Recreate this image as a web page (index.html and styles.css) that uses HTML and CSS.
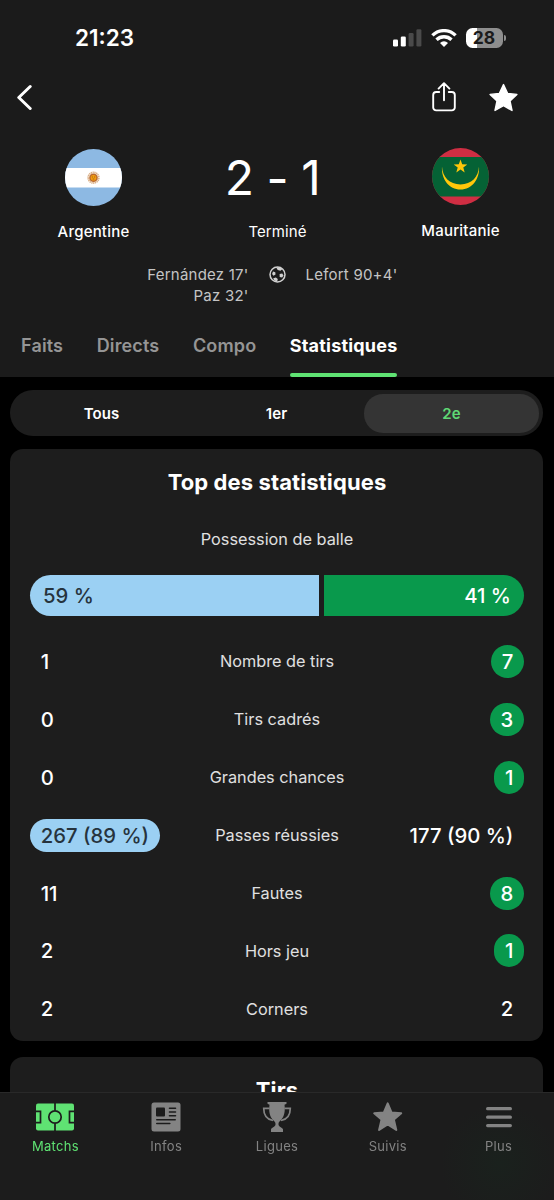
FILE: index.html
```html
<!DOCTYPE html>
<html lang="fr">
<head>
    <meta charset="UTF-8">
    <meta name="viewport" content="width=device-width, initial-scale=1.0">
    <title>Argentine 2 - 1 Mauritanie</title>
    <link rel="stylesheet" href="styles.css">
</head>
<body>
    <header class="header">
        <div class="status-bar">
            <span class="time">21:23</span>
            <div class="status-icons">
                <svg width="29" height="18" viewBox="0 0 29 18">
                    <rect x="0" y="10.5" width="5" height="7" rx="1.3" fill="#fff"/>
                    <rect x="7.8" y="7.5" width="5" height="10" rx="1.3" fill="#fff"/>
                    <rect x="15.6" y="4" width="5" height="13.5" rx="1.3" fill="#4a4a4a"/>
                    <rect x="23.4" y="0.3" width="5" height="17.2" rx="1.3" fill="#4a4a4a"/>
                </svg>
                <svg width="26" height="18" viewBox="0 0 26 18">
                    <g fill="none" stroke="#fff" stroke-width="3.3">
                        <path d="M1.4 6.4A16.4 16.4 0 0 1 24.6 6.4"/>
                        <path d="M5.5 10.8A10.8 10.8 0 0 1 20.5 10.8"/>
                    </g>
                    <path d="M13 18l-4-4.1a5.8 5.8 0 0 1 8 0z" fill="#fff"/>
                </svg>
                <div class="battery"><span>28</span></div>
            </div>
        </div>

        <div class="toolbar">
            <svg width="16" height="26" viewBox="0 0 16 26" fill="none" stroke="#fff" stroke-width="3" stroke-linecap="round" stroke-linejoin="round">
                <path d="M14.2 2.5L2.8 13.5l11.4 11"/>
            </svg>
            <div class="actions">
                <svg width="24" height="30" viewBox="0 0 24 30" fill="none" stroke="#fff" stroke-width="1.9" stroke-linecap="round" stroke-linejoin="round">
                    <path d="M7.2 10H4.2A3 3 0 0 0 1.2 13v12.4a3 3 0 0 0 3 3h15.6a3 3 0 0 0 3-3V13a3 3 0 0 0-3-3h-3M12 18.3V1.6M6.6 6.6L12 1.2l5.4 5.4"/>
                </svg>
                <svg width="30" height="29" viewBox="0 0 30 29" fill="#fff" stroke="#fff" stroke-width="1.4" stroke-linejoin="round">
                    <path d="M14.5 1.6l4.1 8.8 9.3 1-6.9 6.6 2 9.5-8.5-4.8L6 27.5l2-9.5-6.9-6.6 9.3-1z"/>
                </svg>
            </div>
        </div>

        <div class="match">
            <div class="team">
                <svg width="57" height="57" viewBox="0 0 57 57">
                    <clipPath id="clipArg"><circle cx="28.5" cy="28.5" r="28.5"/></clipPath>
                    <g clip-path="url(#clipArg)">
                        <rect width="57" height="57" fill="#8db9e3"/>
                        <rect y="19" width="57" height="19.5" fill="#fff"/>
                        <circle cx="28.5" cy="28.7" r="5.3" fill="none" stroke="#dcb28a" stroke-width="1.8" stroke-dasharray="1.3 .5"/>
                        <circle cx="28.5" cy="28.7" r="4.3" fill="#b9692d"/>
                        <circle cx="28.5" cy="28.7" r="2.8" fill="#f5a010"/>
                        <path d="M26.8 28h1.3M29 28h1.2M27.6 30h1.8" stroke="#8a4b12" stroke-width=".7"/>
                    </g>
                </svg>
                <span class="team-name">Argentine</span>
            </div>
            <div class="result">
                <span class="score">2 <span class="dash">-</span> 1</span>
                <span class="state">Terminé</span>
            </div>
            <div class="team team-away">
                <svg width="57" height="57" viewBox="0 0 57 57">
                    <clipPath id="clipMau"><circle cx="28.5" cy="28.5" r="28.5"/></clipPath>
                    <g clip-path="url(#clipMau)">
                        <rect width="57" height="57" fill="#cf2e43"/>
                        <rect y="9" width="57" height="39.5" fill="#056235"/>
                        <path d="M10 18.5C9 31 17 41.5 28.5 41.5S48 31 47 18.5C46.5 29 39.5 36.4 28.5 36.4S10.5 29 10 18.5z" fill="#ffc70a"/>
                        <path d="M28.5 11.5l1.7 4.8 5.1.1-4 3.1 1.4 4.9-4.2-2.9-4.2 2.9 1.4-4.9-4-3.1 5.1-.1z" fill="#ffc70a"/>
                    </g>
                </svg>
                <span class="team-name">Mauritanie</span>
            </div>
        </div>

        <div class="scorers">
            <div class="scorers-home">Fernández 17'<br>Paz 32'</div>
            <svg width="17" height="17" viewBox="0 0 17 17">
                <circle cx="8.5" cy="8.5" r="7.5" fill="none" stroke="#d0d0d0" stroke-width="1.5"/>
                <path d="M4 5.6l2.3.6.2 2.4-2 1.1-1.4-1.7zM7.2 1.5l3.2-.3 3.2 1.8-2.2 1.8-2.7-.7zM10.6 8l2.6-.6 1.3 2-1.4 2.2-2.4-.7zM4.2 12.2l2.7-.7 1.9 1.6-.6 2.4-2.9-.9z" fill="#d0d0d0"/>
            </svg>
            <div class="scorers-away">Lefort 90+4'</div>
        </div>

        <nav class="tabs">
            <a class="tab">Faits</a>
            <a class="tab">Directs</a>
            <a class="tab">Compo</a>
            <a class="tab active">Statistiques</a>
        </nav>
    </header>

    <main class="content">
        <div class="filter">
            <span>Tous</span>
            <span>1er</span>
            <span class="selected">2e</span>
        </div>

        <section class="card">
            <h2>Top des statistiques</h2>
            <p class="possession-label">Possession de balle</p>
            <div class="possession" style="grid-template-columns: 59fr 41fr">
                <div class="home">59 %</div>
                <div class="away">41 %</div>
            </div>
            <ul class="stats">
                <li><span class="value">1</span><span class="label">Nombre de tirs</span><span class="value away">7</span></li>
                <li><span class="value">0</span><span class="label">Tirs cadrés</span><span class="value away">3</span></li>
                <li><span class="value">0</span><span class="label">Grandes chances</span><span class="value away">1</span></li>
                <li><span class="value home">267 (89 %)</span><span class="label">Passes réussies</span><span class="value">177 (90 %)</span></li>
                <li><span class="value">11</span><span class="label">Fautes</span><span class="value away">8</span></li>
                <li><span class="value">2</span><span class="label">Hors jeu</span><span class="value away">1</span></li>
                <li><span class="value">2</span><span class="label">Corners</span><span class="value">2</span></li>
            </ul>
        </section>

        <section class="card">
            <h2>Tirs</h2>
        </section>
    </main>

    <nav class="bottom-nav">
        <a class="active">
            <svg width="38" height="30" viewBox="0 0 38 30">
                <rect x="0" y="1.5" width="38" height="27" rx="2" fill="#5fe273"/>
                <g fill="none" stroke="#1c1c1c" stroke-width="1.7">
                    <path d="M19 1v7.5M19 21.5V29M0 9.3h4.5v11.4H0M38 9.3h-4.5v11.4H38"/>
                    <circle cx="19" cy="15" r="6.2"/>
                </g>
            </svg>
            <span>Matchs</span>
        </a>
        <a>
            <svg width="30" height="30" viewBox="0 0 30 30">
                <rect x=".5" y=".5" width="29" height="29" rx="2.5" fill="#838383"/>
                <rect x="5" y="5.5" width="9" height="9" rx="1" fill="#1c1c1c"/>
                <path d="M18.5 6.3h6M18.5 10h6M18.5 13.7h6M5.8 17.8h18.4M5.8 21.5h13" stroke="#1c1c1c" stroke-width="1.6" stroke-linecap="round"/>
            </svg>
            <span>Infos</span>
        </a>
        <a>
            <svg width="30" height="30" viewBox="0 0 30 30">
                <path d="M5.5 0h19v1.8l-2 1c.9 6.5-.2 12.4-4 15.6-1.6 1.4-2 2.3-2 3.8 0 2.6 3.5 3.2 4.5 5V30H9v-2.8c1-1.8 4.5-2.4 4.5-5 0-1.5-.4-2.4-2-3.8-3.8-3.2-4.9-9.1-4-15.6l-2-1z" fill="#838383"/>
                <path d="M7.5 6.3H1.7c0 6.4 2.6 11.2 9.3 12.2M22.5 6.3h5.8c0 6.4-2.6 11.2-9.3 12.2" fill="none" stroke="#838383" stroke-width="1.7"/>
            </svg>
            <span>Ligues</span>
        </a>
        <a>
            <svg width="30" height="30" viewBox="0 0 30 30" fill="#838383" stroke="#838383" stroke-width="2" stroke-linejoin="round">
                <path d="M14.7 1.3l3.8 9.2 9.7.8-7.3 6.3 2.4 10.4-8.6-5.5L6.1 28l2.4-10.4-7.3-6.3 9.7-.8z"/>
            </svg>
            <span>Suivis</span>
        </a>
        <a>
            <svg width="30" height="30" viewBox="0 0 30 30" stroke="#838383" stroke-width="3.2" stroke-linecap="round">
                <path d="M3.6 6.7h22.8M3.6 15.2h22.8M3.6 23.6h22.8"/>
            </svg>
            <span>Plus</span>
        </a>
    </nav>
</body>
</html>
```

FILE: styles.css
```css
* {
    box-sizing: border-box;
}
body {
    margin: 0;
    height: 1200px;
    overflow: hidden;
    background-color: #000;
    color: #fff;
    font-family: Inter, "Liberation Sans", sans-serif;
    display: flex;
    flex-direction: column;
}
svg {
    display: block;
    flex: none;
}
.header {
    height: 377px;
    flex: none;
    background-color: #1b1b1b;
    display: flex;
    flex-direction: column;
}

/* status bar */
.status-bar {
    height: 75px;
    padding: 0 47.5px 0 75px;
    display: flex;
    justify-content: space-between;
    align-items: center;
}
.time {
    font-size: 22.5px;
    font-weight: 600;
}
.status-icons {
    display: flex;
    align-items: center;
    gap: 9px;
}
.battery {
    position: relative;
    width: 37px;
    height: 20px;
    border-radius: 6.5px;
    background: linear-gradient(90deg, #fff 11px, #8e8e8e 11px);
    color: #1b1b1b;
    font-size: 17.5px;
    font-weight: 700;
    line-height: 20px;
    text-align: center;
    margin-right: 4px;
}
.battery::after {
    content: "";
    position: absolute;
    right: -3px;
    top: 7px;
    width: 2px;
    height: 6px;
    border-radius: 0 2px 2px 0;
    background-color: #8e8e8e;
}

/* back, share, favourite */
.toolbar {
    height: 44px;
    padding: 0 35px 0 16px;
    display: flex;
    justify-content: space-between;
    align-items: center;
}
.actions {
    display: flex;
    align-items: center;
    gap: 33px;
}

/* score */
.match {
    height: 145px;
    padding-top: 30px;
    display: grid;
    grid-template-columns: 187px 180px 187px;
}
.team, .result {
    display: flex;
    flex-direction: column;
    align-items: center;
}
.team-away {
    margin-top: -1px;
}
.team-name, .state {
    font-size: 15px;
    line-height: 20px;
    margin-top: 16px;
    letter-spacing: 0.2px;
}
.team-name {
    font-weight: 500;
}
.state {
    padding-left: 1px;
    letter-spacing: 0.1px;
}
.score {
    height: 57px;
    padding-right: 9px;
    font-size: 48px;
    line-height: 58px;
    letter-spacing: -0.5px;
}
.dash {
    line-height: 0;
    vertical-align: -1px;
}
.scorers {
    height: 61px;
    display: grid;
    grid-template-columns: 1fr 17px 1fr;
    column-gap: 20px;
    font-size: 15px;
    line-height: 21px;
    letter-spacing: 0.22px;
    color: #c4c4c4;
}
.scorers svg {
    margin-top: 2px;
}
.scorers-home {
    text-align: right;
}

.tabs {
    flex: 1;
    padding-left: 21px;
    display: flex;
    gap: 33.5px;
}
.tab {
    position: relative;
    padding-top: 10px;
    font-size: 18px;
    line-height: 22px;
    font-weight: 600;
    letter-spacing: 0.15px;
    color: #959595;
}
.tab.active {
    color: #fff;
    font-weight: 700;
    letter-spacing: 0.2px;
}
.tab.active::after {
    content: "";
    position: absolute;
    left: 0;
    right: 0;
    bottom: 0;
    height: 4px;
    border-radius: 2px;
    background-color: #5fe273;
}

.content {
    flex: 1;
    min-height: 0;
    overflow: hidden;
    padding: 13px 11px 0 10px;
}
.filter {
    height: 46px;
    padding: 4px;
    border-radius: 23px;
    background-color: #1d1d1d;
    display: grid;
    grid-template-columns: 1fr 1fr 1fr;
    font-size: 15px;
    font-weight: 600;
    line-height: 39px;
    letter-spacing: 0.1px;
    text-align: center;
    margin-bottom: 13px;
}
.filter .selected {
    border-radius: 19px;
    background-color: #343434;
    color: #5fd975;
}

.card {
    height: 592px;
    margin-bottom: 16px;
    padding: 20px 19px 0 20px;
    border-radius: 13px;
    background-color: #1d1d1d;
}
.card h2 {
    margin: 0;
    font-size: 22px;
    line-height: 26px;
    font-weight: 700;
    letter-spacing: 0.1px;
    text-align: center;
}
.possession-label {
    margin: 34px 0 26px;
    font-size: 16.3px;
    line-height: 20px;
    text-align: center;
    color: #e0e0e0;
}
.possession {
    display: grid;
    grid-template-rows: 41px;
    gap: 5px;
    margin-bottom: 16.5px;
    font-size: 20.3px;
    line-height: 42px;
    font-weight: 500;
}
.possession div {
    padding: 0 13px;
}
.possession .home {
    border-radius: 20.5px 0 0 20.5px;
}
.possession .away {
    border-radius: 0 20.5px 20.5px 0;
    text-align: right;
}
.home {
    background-color: #9bd0f3;
    color: #26333d;
}
.away {
    background-color: #09994c;
}
.stats {
    list-style: none;
    margin: 0;
    padding: 0;
}
.stats li {
    height: 57.9px;
    display: grid;
    grid-template-columns: 1fr auto 1fr;
    align-items: center;
}
.value {
    justify-self: start;
    padding: 0 10.7px;
    border-radius: 16.5px;
    font-size: 20.3px;
    line-height: 33px;
    font-weight: 500;
}
.value:last-child {
    justify-self: end;
}
.label {
    font-size: 16.3px;
    color: #e0e0e0;
}

.bottom-nav {
    position: fixed;
    left: 0;
    right: 0;
    bottom: 0;
    height: 108px;
    padding-top: 9px;
    border-top: 1px solid #292929;
    background: radial-gradient(circle at 500px 70px, #1a211d 0, #1c1c1c 60px);
    display: grid;
    grid-template-columns: repeat(5, 1fr);
}
.bottom-nav a {
    display: flex;
    flex-direction: column;
    align-items: center;
    font-size: 13px;
    line-height: 16px;
    letter-spacing: 0.3px;
    color: #838383;
}
.bottom-nav svg {
    margin-bottom: 6px;
}
.bottom-nav .active {
    color: #5fe273;
}
```
